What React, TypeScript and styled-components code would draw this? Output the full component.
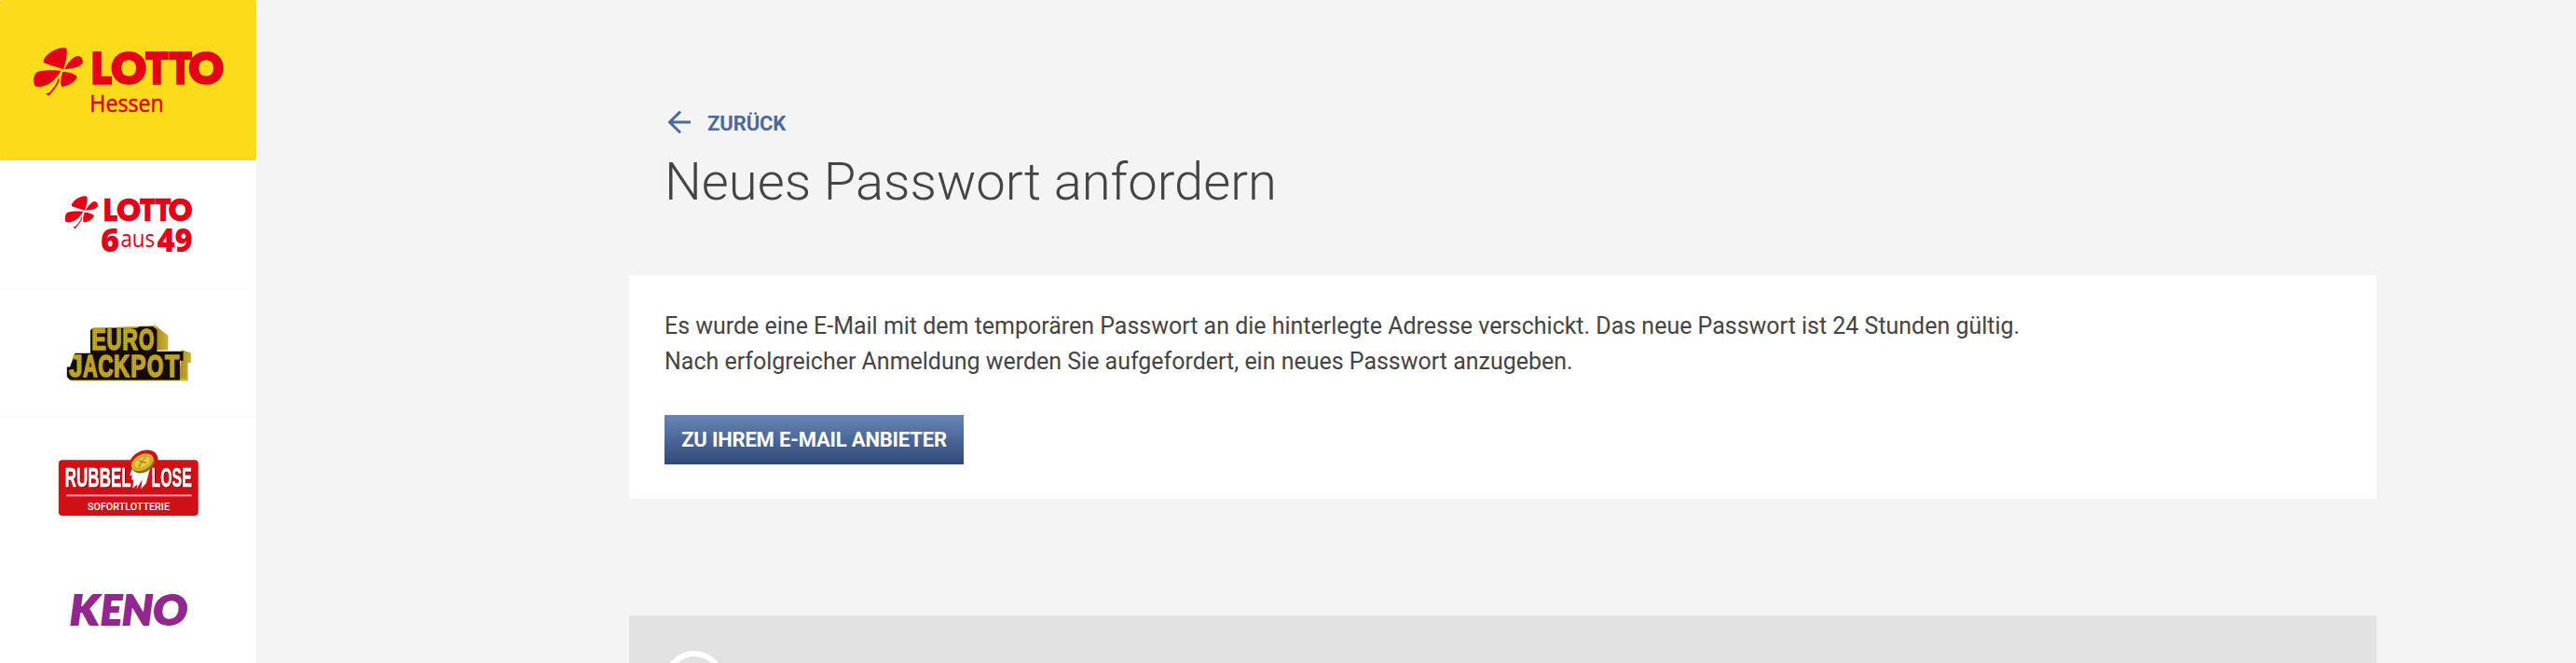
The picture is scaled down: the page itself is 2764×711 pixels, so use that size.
import styled, { createGlobalStyle } from "styled-components";

const GlobalStyle = createGlobalStyle`
  * {
    box-sizing: border-box;
  }

  html,
  body {
    margin: 0;
    height: 100%;
    overflow: hidden;
    background: #f4f4f4;
  }

  body {
    font-family: Roboto, "Liberation Sans", sans-serif;
    color: #444;
  }
`;

const Page = styled.div`
  display: flex;
  height: 711px;
  overflow: hidden;
`;

const Sidebar = styled.nav`
  display: flex;
  flex-direction: column;
  flex: none;
  width: 275px;
  background: #fff;
`;

const BrandLink = styled.a`
  display: block;
  flex: none;
  height: 172px;
  border-radius: 2px;
  background: #fcdc1a;
`;

const GameLink = styled.a`
  display: block;
  flex: none;
  height: 138px;
  border-bottom: 1px solid #fbfbfb;
`;

const Logo = styled.svg`
  display: block;
  width: 275px;
  height: 100%;
`;

const ShadowGroup = styled.g`
  filter: drop-shadow(3px 3px 0 #8a0a0e);
`;

const Main = styled.main`
  flex: none;
  width: 1875px;
  margin-left: 400px;
  padding-top: 113px;
`;

const Header = styled.header`
  height: 182px;
  padding-left: 38px;
`;

const BackLink = styled.a`
  display: flex;
  align-items: center;
  gap: 18px;
  height: 38px;
  color: #4a6a9f;
  font-size: 22px;
  font-weight: 700;
  letter-spacing: -0.1px;
  text-transform: uppercase;
`;

const Title = styled.h1`
  margin: 9px 0 0;
  font-size: 56.1px;
  font-weight: 300;
  line-height: 70px;
`;

const Card = styled.section`
  height: 240px;
  padding: 36px 38px;
  background: #fff;
`;

const Message = styled.p`
  margin: 0 0 38px;
  font-size: 24.98px;
  line-height: 38px;
`;

const MailButton = styled.button`
  display: block;
  width: 321px;
  height: 53px;
  padding: 0;
  border: none;
  background: linear-gradient(#6686b5, #304878);
  color: #fff;
  font-family: inherit;
  font-size: 22px;
  font-weight: 700;
  letter-spacing: -0.18px;
  text-transform: uppercase;
`;

const Footer = styled.footer`
  height: 120px;
  margin-top: 125px;
  padding: 38px;
  background: #e2e2e2;
`;

const FooterIcon = styled.div`
  width: 64px;
  height: 64px;
  border: 6px solid #fff;
  border-radius: 50%;
`;

type LetterProps = {
  char: string;
  x: number;
  width: number;
};

function Letter({ char, x, width }: LetterProps) {
  return (
    <text x={x} textLength={width} lengthAdjust="spacingAndGlyphs">
      {char}
    </text>
  );
}

function LottoMark() {
  return (
    <g fill="#e40017">
      <path d="M204 223C190 217 158 210 141 202C136 192 152 173 172 163C188 155 208 151 214 157C218 170 212 204 204 223Z" />
      <path d="M208 222C216 204 234 182 251 180C262 180 268 193 266 203C256 217 232 221 208 222Z" />
      <path d="M196 228C180 224 138 225 121 231C107 239 106 262 112 276C128 284 156 274 174 257C184 247 192 236 196 228Z" />
      <path d="M202 231C216 231 241 236 248 247C244 262 222 278 198 279C192 266 197 244 202 231Z" />
      <path d="M188 252L192 254C188 272 173 292 157 308L148 302C150 299 153 300 157 299C172 285 182 271 188 252Z" />
      <g
        fontFamily="Lato, sans-serif"
        fontSize="130"
        fontWeight="900"
        stroke="#e40017"
        strokeWidth="11"
        transform="translate(0 268)"
      >
        <Letter char="L" x={294} width={63} />
        <Letter char="O" x={360} width={109} />
        <Letter char="T" x={471} width={68} />
        <Letter char="T" x={547} width={68} />
        <Letter char="O" x={609} width={109} />
      </g>
    </g>
  );
}

function LottoHessenLogo() {
  return (
    <Logo viewBox="0 0 825 516">
      <LottoMark />
      <text
        x="289"
        y="360"
        fill="#e40017"
        stroke="#e40017"
        strokeWidth="1.5"
        fontFamily="'Open Sans', sans-serif"
        fontSize="75"
        fontWeight="500"
        textLength="238"
        lengthAdjust="spacingAndGlyphs"
      >
        Hessen
      </text>
    </Logo>
  );
}

function Lotto649Logo() {
  return (
    <Logo viewBox="-120 -54 825 414">
      <g transform="translate(14.8 -44) scale(0.674 0.685)">
        <LottoMark />
      </g>
      <g fill="#e40017" fontFamily="'Open Sans', sans-serif" fontSize="106">
        <g fontWeight="800">
          <text x="203" y="242" textLength="61" lengthAdjust="spacingAndGlyphs">
            6
          </text>
          <text x="386" y="242" textLength="116" lengthAdjust="spacingAndGlyphs">
            49
          </text>
        </g>
        <text x="268" y="227" fontSize="78" textLength="111" lengthAdjust="spacingAndGlyphs">
          aus
        </text>
      </g>
    </Logo>
  );
}

function EurojackpotLogo() {
  return (
    <Logo viewBox="-120 -60 825 414">
      <defs>
        <pattern id="bulbs" width="6" height="6" patternUnits="userSpaceOnUse">
          <rect width="6" height="6" fill="#e6c61f" />
          <path d="M0 0H6M0 0V6" stroke="#8f771c" strokeWidth="3" />
        </pattern>
        <linearGradient id="gold" x1="0" x2="1">
          <stop offset="0" stopColor="#a58a1d" />
          <stop offset="1" stopColor="#cdb23a" />
        </linearGradient>
      </defs>
      <path d="M380 58L422 90V138H386Z" fill="url(#gold)" />
      <path d="M466 137L496 146V179H486V236H456Z" fill="url(#gold)" />
      <path d="M180 66L330 60L380 57L384 66ZM104 230H486V238H108Z" fill="#d4b32a" />
      <path
        d="M178 66H320L330 62H374L386 72V142H471V172H460V235H104L94 224V192H104L120 148H170V74Z"
        fill="#140b02"
      />
      <g
        fill="url(#bulbs)"
        stroke="url(#bulbs)"
        strokeWidth="5"
        fontFamily="'Liberation Sans', sans-serif"
        fontWeight="700"
        fontSize="93"
      >
        <g transform="translate(0 136)">
          <Letter char="E" x={174} width={47} />
          <Letter char="U" x={223} width={48} />
          <Letter char="R" x={274} width={50} />
          <Letter char="O" x={327} width={49} />
        </g>
        <g fontSize="99" transform="translate(0 223)">
          <Letter char="J" x={101} width={43} />
          <Letter char="A" x={146} width={47} />
          <Letter char="C" x={195} width={49} />
          <Letter char="K" x={246} width={51} />
          <Letter char="P" x={301} width={49} />
          <Letter char="O" x={354} width={53} />
          <Letter char="T" x={412} width={46} />
        </g>
      </g>
    </Logo>
  );
}

function RubbelloseLogo() {
  return (
    <Logo viewBox="-120 -36 825 414">
      <path
        d="M80 101H300C308 82 334 67 358 68C380 70 389 84 390 101H508Q520 101 520 113V269Q520 281 508 281H80Q67 281 67 269V113Q67 101 80 101Z"
        fill="#cf1015"
      />
      <ShadowGroup
        fill="#fff"
        stroke="#fff"
        strokeWidth="1.5"
        fontFamily="'Liberation Sans Narrow', 'Liberation Sans', sans-serif"
        fontWeight="700"
        fontSize="87"
      >
        <text x="88" y="189" textLength="214" lengthAdjust="spacingAndGlyphs">
          RUBBEL
        </text>
        <text x="368" y="189" textLength="131" lengthAdjust="spacingAndGlyphs">
          LOSE
        </text>
      </ShadowGroup>
      <path
        d="M306 128L297 152L305 148L304 166L310 164L307 193L322 180L320 195L338 164L334 195L351 176L363 130Z"
        fill="#fff"
      />
      <g transform="rotate(-28 340 111)">
        <ellipse cx="340" cy="114" rx="39" ry="27" fill="#8f6a16" />
        <ellipse cx="340" cy="108" rx="38" ry="25" fill="#d9b42c" />
        <ellipse cx="340" cy="108" rx="29" ry="17" fill="#e8cb3c" stroke="#b8921f" strokeWidth="2" />
        <path d="M322 116C334 112 340 98 358 100M332 98C338 104 344 112 352 116" fill="none" stroke="#a07c1c" strokeWidth="3" />
      </g>
      <path d="M92 216H498" stroke="#eacccf" strokeWidth="5" />
      <text
        x="161"
        y="262"
        fill="#fff"
        fontFamily="Roboto, sans-serif"
        fontSize="34"
        fontWeight="500"
        textLength="266"
        lengthAdjust="spacingAndGlyphs"
      >
        SOFORTLOTTERIE
      </text>
    </Logo>
  );
}

function KenoLogo() {
  return (
    <Logo viewBox="-120 -42 825 414">
      <g
        fill="#92278f"
        stroke="#92278f"
        strokeWidth="6"
        fontFamily="Lato, sans-serif"
        fontSize="132"
        fontStyle="italic"
        fontWeight="900"
        transform="translate(0 213)"
      >
        <Letter char="K" x={104} width={93} />
        <Letter char="E" x={203} width={69} />
        <Letter char="N" x={273} width={100} />
        <Letter char="O" x={373} width={111} />
      </g>
    </Logo>
  );
}

function BackArrow() {
  return (
    <svg width="28" height="26" viewBox="0 0 28 26" fill="none" stroke="#4a6a9f" strokeWidth="3">
      <path d="M17 0.700L5.500 12L17 23.300M5.500 12H28" />
    </svg>
  );
}

const games = [
  { name: "lotto-6aus49", Icon: Lotto649Logo },
  { name: "eurojackpot", Icon: EurojackpotLogo },
  { name: "rubbellose", Icon: RubbelloseLogo },
  { name: "keno", Icon: KenoLogo },
];

export default function App() {
  return (
    <>
      <GlobalStyle />
      <Page>
        <Sidebar>
          <BrandLink>
            <LottoHessenLogo />
          </BrandLink>
          {games.map(({ name, Icon }) => (
            <GameLink key={name}>
              <Icon />
            </GameLink>
          ))}
        </Sidebar>
        <Main>
          <Header>
            <BackLink>
              <BackArrow />
              Zurück
            </BackLink>
            <Title>Neues Passwort anfordern</Title>
          </Header>
          <Card>
            <Message>
              Es wurde eine E-Mail mit dem temporären Passwort an die hinterlegte Adresse verschickt. Das neue Passwort ist 24 Stunden gültig.
              <br />
              Nach erfolgreicher Anmeldung werden Sie aufgefordert, ein neues Passwort anzugeben.
            </Message>
            <MailButton>Zu Ihrem E-Mail Anbieter</MailButton>
          </Card>
          <Footer>
            <FooterIcon />
          </Footer>
        </Main>
      </Page>
    </>
  );
}
